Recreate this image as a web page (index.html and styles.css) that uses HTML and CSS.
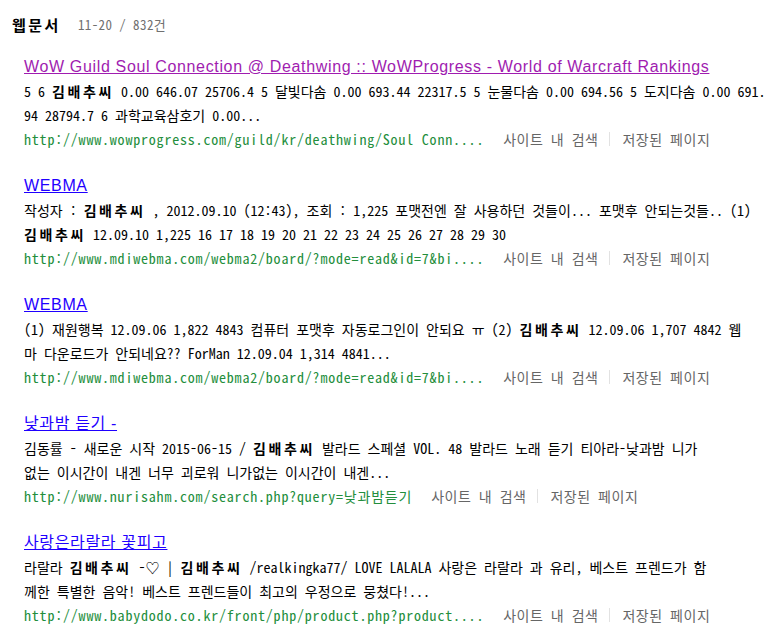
FILE: index.html
```html
<!DOCTYPE html>
<html lang="ko">
<head>
  <meta charset="UTF-8" />
  <title>웹문서 검색결과</title>
  <link rel="stylesheet" href="styles.css">
</head>
<body>

  <div class="section">
    <div class="section-head">
      <h2>웹문서</h2>
      <span class="count">11-20 / 832건</span>
    </div>

    <ul class="results">
      <li class="item">
        <a class="title visited" href="#">WoW Guild Soul Connection @ Deathwing :: WoWProgress - World of Warcraft Rankings</a>
        <p class="desc">5 6 <b>김배추씨</b> 0.00 646.07 25706.4 5 달빛다솜 0.00 693.44 22317.5 5 눈물다솜 0.00 694.56 5 도지다솜 0.00 691.<br>94 28794.7 6 과학교육삼호기 0.00...</p>
        <div class="meta">
          <span class="url">http://www.wowprogress.com/guild/kr/deathwing/Soul Conn....</span>
          <a class="extra" href="#">사이트 내 검색</a>
          <span class="sep"></span>
          <a class="extra" href="#">저장된 페이지</a>
        </div>
      </li>

      <li class="item">
        <a class="title" href="#">WEBMA</a>
        <p class="desc">작성자 : <b>김배추씨</b> , 2012.09.10 (12:43), 조회 : 1,225 포맷전엔 잘 사용하던 것들이... 포맷후 안되는것들.. (1)<br><b>김배추씨</b> 12.09.10 1,225 16 17 18 19 20 21 22 23 24 25 26 27 28 29 30</p>
        <div class="meta">
          <span class="url">http://www.mdiwebma.com/webma2/board/?mode=read&amp;id=7&amp;bi....</span>
          <a class="extra" href="#">사이트 내 검색</a>
          <span class="sep"></span>
          <a class="extra" href="#">저장된 페이지</a>
        </div>
      </li>

      <li class="item">
        <a class="title" href="#">WEBMA</a>
        <p class="desc">(1) 재원행복 12.09.06 1,822 4843 컴퓨터 포맷후 자동로그인이 안되요 ㅠ (2) <b>김배추씨</b> 12.09.06 1,707 4842 웹<br>마 다운로드가 안되네요?? ForMan 12.09.04 1,314 4841...</p>
        <div class="meta">
          <span class="url">http://www.mdiwebma.com/webma2/board/?mode=read&amp;id=7&amp;bi....</span>
          <a class="extra" href="#">사이트 내 검색</a>
          <span class="sep"></span>
          <a class="extra" href="#">저장된 페이지</a>
        </div>
      </li>

      <li class="item">
        <a class="title" href="#">낮과밤 듣기 -</a>
        <p class="desc">김동률 - 새로운 시작 2015-06-15 / <b>김배추씨</b> 발라드 스페셜 VOL. 48 발라드 노래 듣기 티아라-낮과밤 니가<br>없는 이시간이 내겐 너무 괴로워 니가없는 이시간이 내겐...</p>
        <div class="meta">
          <span class="url">http://www.nurisahm.com/search.php?query=낮과밤듣기</span>
          <a class="extra" href="#">사이트 내 검색</a>
          <span class="sep"></span>
          <a class="extra" href="#">저장된 페이지</a>
        </div>
      </li>

      <li class="item">
        <a class="title" href="#">사랑은라랄라 꽃피고</a>
        <p class="desc">라랄라 <b>김배추씨</b> -♡ | <b>김배추씨</b> /realkingka77/ LOVE LALALA 사랑은 라랄라 과 유리, 베스트 프렌드가 함<br>께한 특별한 음악! 베스트 프렌드들이 최고의 우정으로 뭉쳤다!...</p>
        <div class="meta">
          <span class="url">http://www.babydodo.co.kr/front/php/product.php?product....</span>
          <a class="extra" href="#">사이트 내 검색</a>
          <span class="sep"></span>
          <a class="extra" href="#">저장된 페이지</a>
        </div>
      </li>
    </ul>
  </div>

</body>
</html>
```

FILE: styles.css
```css
body {
  margin: 0;
  background: #fff;
  color: #000;
  font-family: "Noto Sans CJK KR", sans-serif;
  font-feature-settings: "hwid";
  font-size: 14px;
}
.section {
  padding: 12px 0 0 12px;
}
.section-head {
  display: flex;
  align-items: center;
  gap: 17px;
  height: 24px;
}
.section-head h2 {
  margin: 0;
  font-size: 15px;
  font-weight: bold;
  letter-spacing: 2.5px;
}
.count {
  color: #707070;
  font-size: 13px;
  letter-spacing: 0.4px;
}
.results {
  list-style: none;
  margin: 19px 0 0;
  padding: 0 0 0 12px;
}
.item {
  margin-bottom: 23px;
}
.title {
  display: inline-block;
  font-family: "Liberation Sans", "Noto Sans CJK KR", sans-serif;
  font-feature-settings: normal;
  font-size: 16px;
  line-height: 24px;
  letter-spacing: 0.65px;
  color: #1f00ff;
}
.title.visited {
  color: #a01cb0;
}
.desc {
  margin: 0;
  line-height: 24px;
  white-space: nowrap;
}
.desc b {
  letter-spacing: 2.6px;
}
.meta {
  display: flex;
  align-items: center;
  height: 24px;
}
.url {
  color: #238e3c;
  letter-spacing: 0.8px;
  margin-right: 19px;
}
.extra {
  color: #666;
  text-decoration: none;
  letter-spacing: 0.5px;
}
.sep {
  width: 1px;
  height: 14px;
  background: #e2e2e2;
  margin: 0 12px 0 11px;
}
```
